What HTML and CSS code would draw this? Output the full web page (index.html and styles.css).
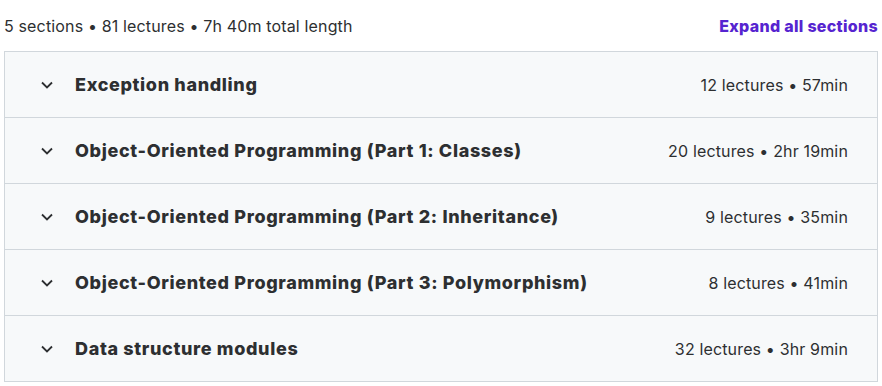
FILE: index.html
```html
<!DOCTYPE html>
<html lang="en">
<head>
  <meta charset="UTF-8">
  <title>Course content</title>
  <link rel="stylesheet" href="styles.css">
</head>
<body>
  <div class="curriculum">
    <div class="curriculum-header">
      <span class="summary">5 sections • 81 lectures • 7h 40m total length</span>
      <button class="expand-all">Expand all sections</button>
    </div>

    <div class="sections">
      <div class="section">
        <svg class="chevron" viewBox="0 0 12 8"><path d="M1 1.5l5 5 5-5" fill="none" stroke="currentColor" stroke-width="1.8"/></svg>
        <span class="section-title">Exception handling</span>
        <span class="section-meta">12 lectures • 57min</span>
      </div>
      <div class="section">
        <svg class="chevron" viewBox="0 0 12 8"><path d="M1 1.5l5 5 5-5" fill="none" stroke="currentColor" stroke-width="1.8"/></svg>
        <span class="section-title">Object-Oriented Programming (Part 1: Classes)</span>
        <span class="section-meta">20 lectures • 2hr 19min</span>
      </div>
      <div class="section">
        <svg class="chevron" viewBox="0 0 12 8"><path d="M1 1.5l5 5 5-5" fill="none" stroke="currentColor" stroke-width="1.8"/></svg>
        <span class="section-title">Object-Oriented Programming (Part 2: Inheritance)</span>
        <span class="section-meta">9 lectures • 35min</span>
      </div>
      <div class="section">
        <svg class="chevron" viewBox="0 0 12 8"><path d="M1 1.5l5 5 5-5" fill="none" stroke="currentColor" stroke-width="1.8"/></svg>
        <span class="section-title">Object-Oriented Programming (Part 3: Polymorphism)</span>
        <span class="section-meta">8 lectures • 41min</span>
      </div>
      <div class="section">
        <svg class="chevron" viewBox="0 0 12 8"><path d="M1 1.5l5 5 5-5" fill="none" stroke="currentColor" stroke-width="1.8"/></svg>
        <span class="section-title">Data structure modules</span>
        <span class="section-meta">32 lectures • 3hr 9min</span>
      </div>
    </div>
  </div>
</body>
</html>
```

FILE: styles.css
```css
body {
  margin: 0;
  background-color: #ffffff;
  color: #2d2f31;
  font-family: Inter, 'Noto Sans', sans-serif;
}

.curriculum {
  width: 874px;
  padding-left: 4px;
}

.curriculum-header {
  display: flex;
  align-items: center;
  justify-content: space-between;
  height: 51px;
}

.summary {
  font-size: 16px;
  letter-spacing: 0.15px;
}

.expand-all {
  background: none;
  border: none;
  padding: 0;
  font-family: inherit;
  font-size: 16px;
  font-weight: 800;
  letter-spacing: 0.3px;
  color: #5624d0;
  cursor: pointer;
}

.sections {
  border: 1px solid #d1d7dc;
}

.section {
  display: flex;
  align-items: center;
  height: 65px;
  padding: 0 29px 0 36px;
  background-color: #f7f9fa;
  border-bottom: 1px solid #d1d7dc;
}

.section:last-child {
  border-bottom: none;
}

.chevron {
  width: 12px;
  height: 8px;
  margin-right: 22px;
  color: #2d2f31;
}

.section-title {
  flex: 1;
  font-size: 18px;
  font-weight: 800;
  letter-spacing: 0.65px;
}

.section-meta {
  font-size: 16px;
  letter-spacing: 0.15px;
}
```
